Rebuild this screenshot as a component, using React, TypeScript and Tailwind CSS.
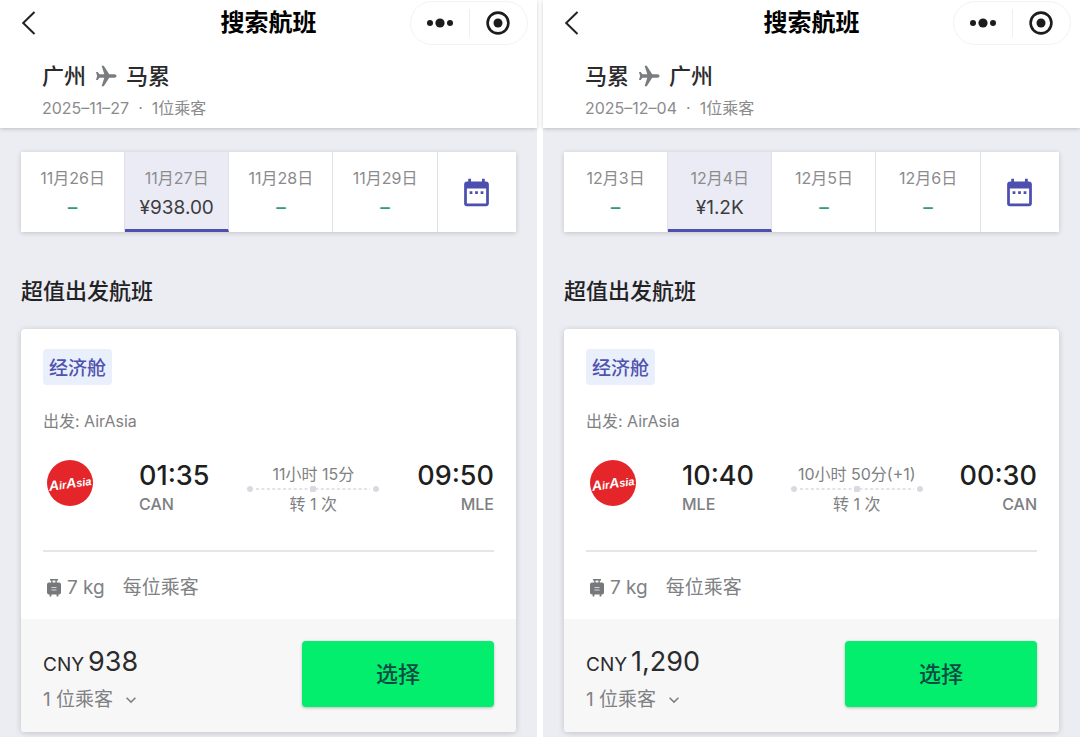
import { MdDateRange, MdKeyboardArrowDown } from "react-icons/md"

type Day = { label: string; price?: string }

type Flight = {
  from: string
  to: string
  date: string
  days: Day[]
  departTime: string
  departCode: string
  arriveTime: string
  arriveCode: string
  duration: string
  price: string
}

const flights: Flight[] = [
  {
    from: "广州",
    to: "马累",
    date: "2025–11–27",
    days: [
      { label: "11月26日" },
      { label: "11月27日", price: "¥938.00" },
      { label: "11月28日" },
      { label: "11月29日" },
    ],
    departTime: "01:35",
    departCode: "CAN",
    arriveTime: "09:50",
    arriveCode: "MLE",
    duration: "11小时 15分",
    price: "938",
  },
  {
    from: "马累",
    to: "广州",
    date: "2025–12–04",
    days: [
      { label: "12月3日" },
      { label: "12月4日", price: "¥1.2K" },
      { label: "12月5日" },
      { label: "12月6日" },
    ],
    departTime: "10:40",
    departCode: "MLE",
    arriveTime: "00:30",
    arriveCode: "CAN",
    duration: "10小时 50分(+1)",
    price: "1,290",
  },
]

function NavBar() {
  return (
    <div className="grid h-[46px] grid-cols-[1fr_auto_1fr] items-center px-[9px]">
      <button aria-label="返回" className="ml-3 justify-self-start">
        <svg width="16" height="26" viewBox="0 0 16 26" fill="none" stroke="#222" strokeWidth="2">
          <path d="M13.500 2 2.200 13l11.300 11" />
        </svg>
      </button>
      <h1 className="text-2xl font-bold text-black">搜索航班</h1>
      <div className="flex h-11 w-[118px] items-center justify-self-end rounded-full border border-[#f3f3f3]">
        <button aria-label="更多" className="flex flex-1 justify-center">
          <svg width="28" height="10" viewBox="0 0 28 10" fill="#1c1c1c">
            <circle cx="4" cy="5" r="3" />
            <circle cx="14" cy="5" r="4.6" />
            <circle cx="24" cy="5" r="3" />
          </svg>
        </button>
        <span className="h-7 w-px bg-[#eeeeee]" />
        <button aria-label="关闭" className="flex flex-1 justify-center">
          <svg width="24" height="24" viewBox="0 0 24 24">
            <circle cx="12" cy="12" r="10.4" fill="none" stroke="#1c1c1c" strokeWidth="2.6" />
            <circle cx="12" cy="12" r="4.5" fill="#1c1c1c" />
          </svg>
        </button>
      </div>
    </div>
  )
}

function PlaneIcon() {
  return (
    <svg width="22" height="22" viewBox="0 0 22 22" fill="#7b7c7f">
      <path d="M21.500 11c0-1-.9-1.700-2-1.700h-5.300L8.800.8H6.600l2.700 8.500H4.500L2.700 7H1l1.100 4L1 15h1.700l1.800-2.300h4.800L6.600 21.200h2.200l5.400-8.500h5.300c1.100 0 2-.7 2-1.700z" />
    </svg>
  )
}

function DateTabs({ days }: { days: Day[] }) {
  return (
    <div className="flex h-20 bg-white shadow-[0_1px_5px_rgba(0,0,0,0.18)]">
      {days.map((day) => (
        <button
          key={day.label}
          className={
            day.price
              ? "flex flex-[104] flex-col items-center border-b-[3px] border-r border-b-[#4c4fae] border-r-[#dfe0e6] bg-[#ebebf5] pt-[14px]"
              : "flex flex-[104] flex-col items-center border-r border-[#dfe0e6] pt-[14px]"
          }
        >
          <span className="text-base leading-6 text-[#8b8b8d]">{day.label}</span>
          {day.price ? (
            <span className="mt-1 text-[19px] leading-7 text-[#3c3c40]">{day.price}</span>
          ) : (
            <span className="mt-1 text-[19px] font-medium leading-7 text-[#2f9e6b]">–</span>
          )}
        </button>
      ))}
      <button aria-label="选择日期" className="flex flex-[79] items-center justify-center text-[#4c4fae]">
        <MdDateRange size={33} />
      </button>
    </div>
  )
}

function AirlineLogo() {
  return (
    <svg width="46" height="46" viewBox="0 0 46 46" role="img" aria-label="AirAsia">
      <circle cx="23" cy="23" r="23" fill="#e4252a" />
      <text
        x="23"
        y="28"
        textAnchor="middle"
        transform="rotate(-8 23 23)"
        fill="#fff"
        fontFamily="'Liberation Sans', sans-serif"
        fontSize="11"
        fontStyle="italic"
        fontWeight="700"
      >
        <tspan fontSize="14">A</tspan>ir<tspan fontSize="14">A</tspan>sia
      </text>
    </svg>
  )
}

function LuggageIcon() {
  return (
    <svg width="14" height="18" viewBox="0 0 14 18" fill="#77787c">
      <path d="M3 0h8v1.400H9.800V3.600H12A2 2 0 0 1 14 5.600v7.800a2 2 0 0 1-2 2h-.6V17.500H9.600v-2.100H4.400v2.100H2.600v-2.100H2a2 2 0 0 1-2-2V5.600a2 2 0 0 1 2-2h2.200V1.400H3zM5.600 1.400v2.200h2.800V1.400z" />
      <path d="M4.500 8.500h5M4.500 11h5" stroke="#d5d5d8" strokeWidth="1.2" />
    </svg>
  )
}

function RouteLine() {
  return (
    <svg width="132" height="6" viewBox="0 0 132 6" fill="#d9dae1">
      <path d="M9 3H123" stroke="#d9dae1" strokeWidth="1.6" strokeDasharray="3 2.4" />
      <circle cx="3" cy="3" r="3" />
      <rect x="63" width="6" height="6" rx="1.5" />
      <circle cx="129" cy="3" r="3" />
    </svg>
  )
}

function FlightCard({ flight }: { flight: Flight }) {
  return (
    <article className="overflow-hidden rounded bg-white shadow-[0_1px_6px_rgba(0,0,0,0.18)]">
      <div className="px-[22px] pb-[19px] pt-5">
        <div className="flex">
          <span className="rounded bg-[#e9f0fb] px-[6px] pb-1 pt-2 text-[19px] font-medium leading-6 text-[#5053ae]">
            经济舱
          </span>
        </div>
        <p className="mt-6 text-base leading-6 text-[#808184]">出发: AirAsia</p>

        <div className="mt-[27px] flex">
          <div className="flex w-24 shrink-0 items-start pl-1">
            <AirlineLogo />
          </div>
          <div className="flex flex-1 justify-between">
            <div>
              <p className="text-[27px] font-medium leading-8 text-[#1f1f21]">{flight.departTime}</p>
              <p className="text-base font-medium leading-6 text-[#7d7e82]">{flight.departCode}</p>
            </div>
            <div className="flex flex-col items-center pt-[2px] text-base text-[#808184]">
              <p className="leading-6">{flight.duration}</p>
              <RouteLine />
              <p className="leading-6">转 1 次</p>
            </div>
            <div className="text-right">
              <p className="text-[27px] font-medium leading-8 text-[#1f1f21]">{flight.arriveTime}</p>
              <p className="text-base font-medium leading-6 text-[#7d7e82]">{flight.arriveCode}</p>
            </div>
          </div>
        </div>

        <hr className="mt-[34px] border-t-2 border-[#e6e6e9]" />

        <div className="mt-6 flex items-center pl-1 text-[19px] leading-6 text-[#808184]">
          <LuggageIcon />
          <span className="ml-[6px]">7 kg</span>
          <span className="ml-[18px]">每位乘客</span>
        </div>
      </div>

      <div className="flex items-start justify-between bg-[#f7f7f7] px-[22px] pb-5 pt-[22px]">
        <div className="pt-[5px]">
          <p className="flex h-8 items-baseline gap-1 text-[#2b2b2d]">
            <span className="text-[19px] leading-8">CNY</span>
            <span className="text-[27px] leading-8">{flight.price}</span>
          </p>
          <button className="mt-[10px] flex h-6 items-center text-[19px] leading-6 text-[#808184]">
            1 位乘客
            <MdKeyboardArrowDown size={20} className="ml-2" />
          </button>
        </div>
        <button className="h-[66px] w-48 rounded bg-[#02ee6c] text-[22px] font-medium text-[#0b4a45] shadow-[0_1px_3px_rgba(0,0,0,0.25)]">
          选择
        </button>
      </div>
    </article>
  )
}

function FlightSearch({ flight }: { flight: Flight }) {
  return (
    <section className="bg-[#ecedf2]">
      <header className="bg-white pb-2 shadow-[0_1px_4px_rgba(0,0,0,0.2)]">
        <NavBar />
        <div className="mt-[14px] px-[42px]">
          <h2 className="flex items-center gap-[9px] text-[22px] font-medium leading-8 text-[#2b2b2d]">
            {flight.from}
            <PlaneIcon />
            {flight.to}
          </h2>
          <p className="mt-1 flex gap-[9px] text-base leading-6 text-[#8b8b8d]">
            <span>{flight.date}</span>
            <span>·</span>
            <span>1位乘客</span>
          </p>
        </div>
      </header>

      <main className="px-[21px] pb-[5px] pt-6">
        <DateTabs days={flight.days} />
        <h3 className="mb-[22px] mt-[43px] text-[22px] font-medium leading-8 text-[#222225]">超值出发航班</h3>
        <FlightCard flight={flight} />
      </main>
    </section>
  )
}

export default function App() {
  return (
    <div className="grid min-h-screen grid-cols-2 gap-[6px] bg-white font-['Inter','Noto_Sans_CJK_SC',sans-serif]">
      {flights.map((flight) => (
        <FlightSearch key={flight.date} flight={flight} />
      ))}
    </div>
  )
}
